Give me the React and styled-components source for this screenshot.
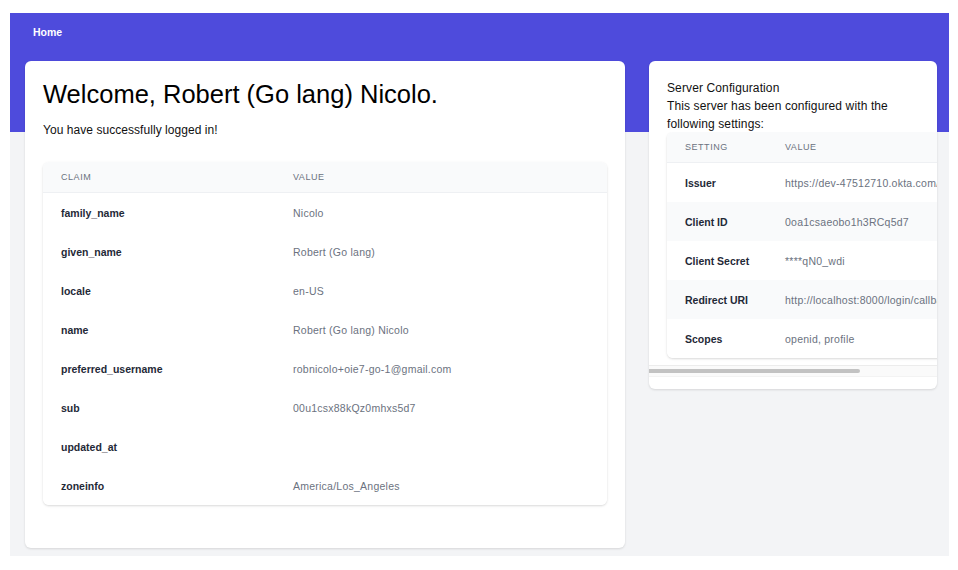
import React from "react";
import styled, { createGlobalStyle } from "styled-components";

const Global = createGlobalStyle`
  html, body { margin: 0; padding: 0; background: #ffffff; }
  body { font-family: "Liberation Sans", Arial, Helvetica, sans-serif; color: #111827; }
  * { box-sizing: border-box; }
`;

const Frame = styled.div`
  margin: 13px 9px 0 10px;
  height: 543px;
  background: linear-gradient(to bottom, #4e4bdc 0, #4e4bdc 119px, #f3f4f6 119px);
  display: flex;
  flex-direction: column;
`;

const Nav = styled.nav`
  height: 38px;
  display: flex;
  align-items: center;
  padding-left: 23px;
`;

const NavLink = styled.a`
  color: #ffffff;
  font-size: 10.5px;
  font-weight: 700;
  text-decoration: none;
`;

const Main = styled.main`
  display: grid;
  grid-template-columns: 600px 288px;
  column-gap: 24px;
  align-items: start;
  padding: 10px 0 0 15px;
`;

const Card = styled.section`
  background: #ffffff;
  border-radius: 6px;
  box-shadow: 0 1px 3px rgba(0, 0, 0, 0.08), 0 1px 2px rgba(0, 0, 0, 0.05);
  overflow: hidden;
`;

const WelcomeCard = styled(Card)`
  padding: 18px 18px 43px;
`;

const ConfigCard = styled(Card)`
  padding: 18px 0 12px;
`;

const Heading = styled.h1`
  margin: 0;
  font-size: 25.5px;
  line-height: 30px;
  font-weight: 400;
  color: #000000;
`;

const Lead = styled.p`
  margin: 12px 0 23px;
  font-size: 12px;
  line-height: 18px;
  letter-spacing: 0.05px;
  color: #111111;
`;

const Intro = styled.div`
  padding: 0 18px;
  font-size: 12px;
  line-height: 18px;
  letter-spacing: 0.12px;
  color: #111111;
`;

const DataGrid = styled.div`
  display: grid;
  grid-template-columns: ${(p) => p.$cols};
  width: ${(p) => (p.$fit ? "max-content" : "auto")};
  border-radius: 6px;
  overflow: hidden;
  box-shadow: 0 1px 3px rgba(0, 0, 0, 0.1), 0 1px 2px rgba(0, 0, 0, 0.06);
  background: #ffffff;
`;

const HeadCell = styled.div`
  height: 31px;
  display: flex;
  align-items: center;
  padding: 0 18px;
  background: #f9fafb;
  border-bottom: 1px solid #eef0f3;
  font-size: 9px;
  letter-spacing: 0.06em;
  text-transform: uppercase;
  color: #6b7280;
  white-space: nowrap;
`;

const Cell = styled.div`
  height: 39px;
  display: flex;
  align-items: center;
  padding: 0 18px;
  font-size: 10.5px;
  white-space: nowrap;
  letter-spacing: ${(p) => (p.$key ? "0" : "0.24px")};
  background: ${(p) => (p.$shade ? "#f9fafb" : "#ffffff")};
  color: ${(p) => (p.$key ? "#1f2937" : "#6b7280")};
  font-weight: ${(p) => (p.$key ? 700 : 400)};
`;

const ScrollArea = styled.div`
  margin-top: -1px;
  overflow: hidden;
  padding: 0 0 7px 18px;
`;

const ScrollTrack = styled.div`
  height: 12px;
  padding: 3px 0;
  background: #fafafa;
  border-top: 1px solid #ececec;
  border-bottom: 1px solid #f3f3f3;
`;

const ScrollThumb = styled.div`
  height: 100%;
  background: #c2c2c2;
  border-radius: 0 4px 4px 0;
`;

const claims = [
  ["family_name", "Nicolo"],
  ["given_name", "Robert (Go lang)"],
  ["locale", "en-US"],
  ["name", "Robert (Go lang) Nicolo"],
  ["preferred_username", "robnicolo+oie7-go-1@gmail.com"],
  ["sub", "00u1csx88kQz0mhxs5d7"],
  ["updated_at", ""],
  ["zoneinfo", "America/Los_Angeles"],
];

const settings = [
  ["Issuer", "https://dev-47512710.okta.com/oauth2/default"],
  ["Client ID", "0oa1csaeobo1h3RCq5d7"],
  ["Client Secret", "****qN0_wdi"],
  ["Redirect URI", "http://localhost:8000/login/callback"],
  ["Scopes", "openid, profile"],
];

export default function App() {
  const thumbWidth = 211;
  return (
    <>
      <Global />
      <Frame>
        <Nav>
          <NavLink href="#">Home</NavLink>
        </Nav>
        <Main>
          <WelcomeCard>
            <Heading>Welcome, Robert (Go lang) Nicolo.</Heading>
            <Lead>You have successfully logged in!</Lead>
            <DataGrid $cols="232px 1fr">
              <HeadCell>Claim</HeadCell>
              <HeadCell>Value</HeadCell>
              {claims.map(([k, v]) => (
                <React.Fragment key={k}>
                  <Cell $key>{k}</Cell>
                  <Cell>{v}</Cell>
                </React.Fragment>
              ))}
            </DataGrid>
          </WelcomeCard>
          <ConfigCard>
            <Intro>
              Server Configuration
              <br />
              This server has been configured with the following settings:
            </Intro>
            <ScrollArea>
              <DataGrid $cols="100px max-content" $fit>
                <HeadCell>Setting</HeadCell>
                <HeadCell>Value</HeadCell>
                {settings.map(([k, v], i) => (
                  <React.Fragment key={k}>
                    <Cell $key $shade={i % 2 === 1}>{k}</Cell>
                    <Cell $shade={i % 2 === 1}>{v}</Cell>
                  </React.Fragment>
                ))}
              </DataGrid>
            </ScrollArea>
            <ScrollTrack>
              <ScrollThumb style={{ width: thumbWidth }} />
            </ScrollTrack>
          </ConfigCard>
        </Main>
      </Frame>
    </>
  );
}
